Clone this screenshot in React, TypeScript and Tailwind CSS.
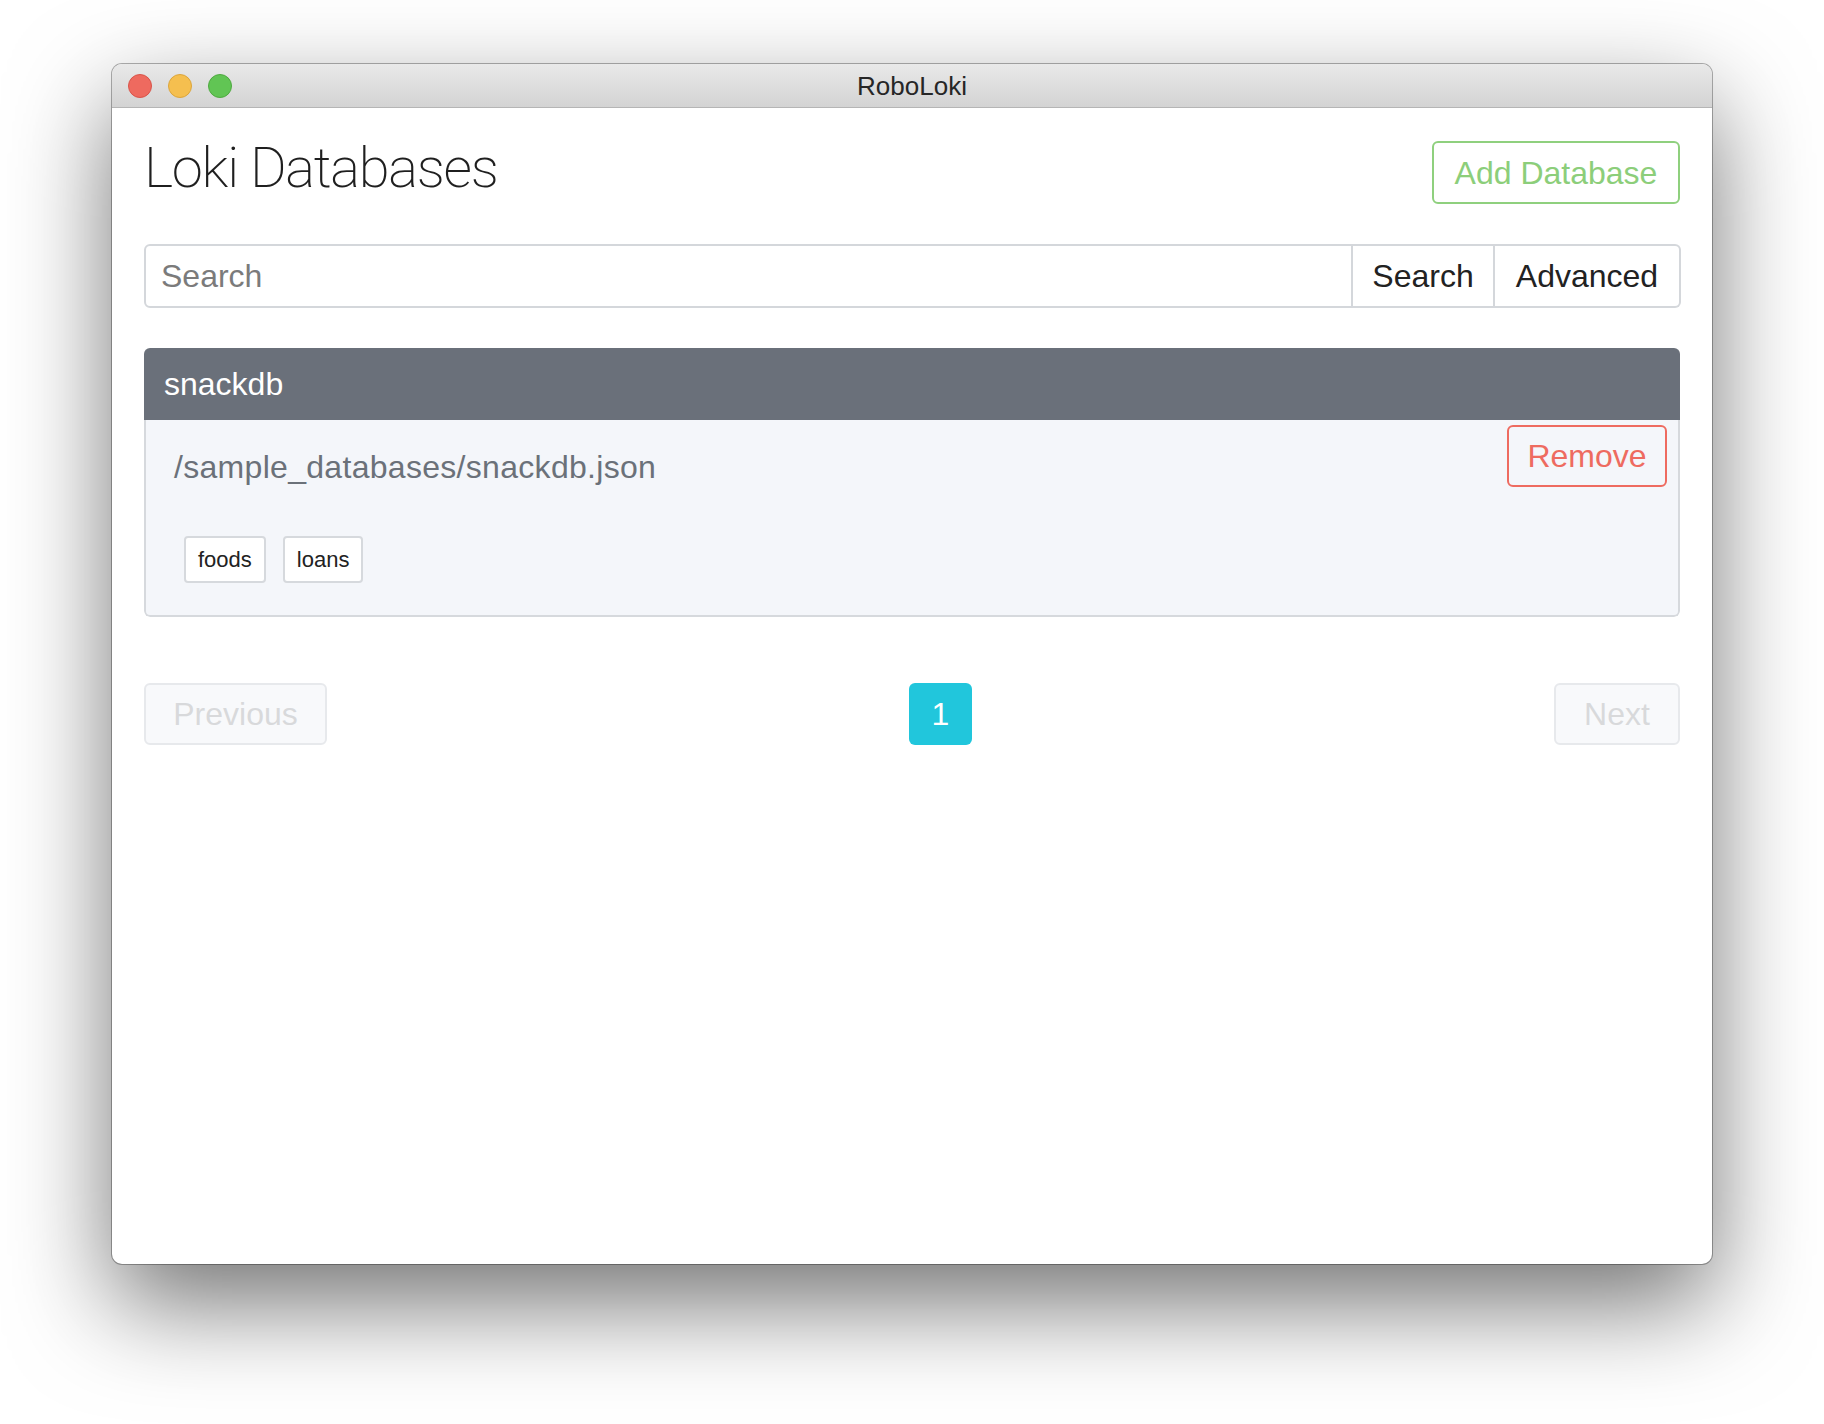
import React from 'react'

const tags = ['foods', 'loans']

function TrafficLights() {
  return (
    <div className="flex items-center gap-[16px] pl-[16px]">
      <span className="h-[24px] w-[24px] rounded-full border border-[#d8544a] bg-[#ee6a5f]" />
      <span className="h-[24px] w-[24px] rounded-full border border-[#dba53c] bg-[#f5bf4f]" />
      <span className="h-[24px] w-[24px] rounded-full border border-[#4fa940] bg-[#61c554]" />
    </div>
  )
}

function TitleBar() {
  return (
    <div className="grid h-[44px] grid-cols-[1fr_auto_1fr] items-center border-b border-[#b5b5b5] bg-linear-to-b from-[#e9e9e9] to-[#d3d3d3]">
      <TrafficLights />
      <div className="text-[26px] leading-none text-[#262626]">RoboLoki</div>
      <div />
    </div>
  )
}

function SearchBar() {
  return (
    <div className="mt-[40px] flex h-[64px] w-[calc(100%+1px)] text-[32px]">
      <input
        className="min-w-0 flex-1 rounded-l-[6px] border-2 border-[#d4d7db] bg-white pl-[15px] text-[#222] outline-none placeholder:text-[#7b7b7b]"
        placeholder="Search"
      />
      <button className="w-[142px] border-y-2 border-r-2 border-[#d4d7db] bg-white text-[#222]">Search</button>
      <button className="w-[186px] rounded-r-[6px] border-y-2 border-r-2 border-[#d4d7db] bg-white text-[#222]">
        Advanced
      </button>
    </div>
  )
}

function DatabaseCard() {
  return (
    <div className="mt-[40px] overflow-hidden rounded-[6px]">
      <div className="flex h-[72px] items-center bg-[#6a707a] pl-[20px] text-[32px] text-white">snackdb</div>
      <div className="rounded-b-[6px] border-x-2 border-b-2 border-[#d6d9dd] bg-[#f4f6fa] pb-[32px] pr-[11px] pt-[5px]">
        <div className="flex items-start justify-between">
          <div className="ml-[28px] mt-[18px] text-[32px] leading-[48px] tracking-[0.3px] text-[#6b7179]">
            /sample_databases/snackdb.json
          </div>
          <button className="h-[62px] w-[160px] rounded-[6px] border-2 border-[#ee6b60] text-[32px] text-[#ee6b60]">
            Remove
          </button>
        </div>
        <div className="ml-[38px] mt-[45px] flex gap-[17px]">
          {tags.map(tag => (
            <span
              key={tag}
              className="h-[47px] rounded-[4px] border-2 border-[#d6d9dd] bg-white px-[12px] text-[22px] leading-[43px] text-[#222]"
            >
              {tag}
            </span>
          ))}
        </div>
      </div>
    </div>
  )
}

function Pagination() {
  return (
    <div className="mt-[66px] flex items-center justify-between text-[32px]">
      <button className="h-[62px] w-[183px] rounded-[6px] border-2 border-[#e7e9ec] bg-[#f8f9fb] text-[#d8d9db]">
        Previous
      </button>
      <button className="h-[62px] w-[63px] rounded-[6px] bg-[#21c6dc] text-white">1</button>
      <button className="h-[62px] w-[126px] rounded-[6px] border-2 border-[#e7e9ec] bg-[#f8f9fb] text-[#d8d9db]">
        Next
      </button>
    </div>
  )
}

export default function App() {
  return (
    <div className="min-h-[1424px] w-full bg-white pl-[112px] pt-[64px] font-['Liberation_Sans','Helvetica_Neue',Arial,sans-serif]">
      <div className="flex h-[1200px] w-[1600px] flex-col overflow-hidden rounded-[10px] bg-white shadow-[0_40px_100px_rgba(0,0,0,0.55),0_0_0_1px_rgba(0,0,0,0.3)]">
        <TitleBar />
        <main className="flex flex-col px-[32px] pt-[27px]">
          <div className="flex items-start justify-between">
            <h1 className="font-['Roboto',sans-serif] text-[56px] font-extralight leading-[67px] tracking-[-1.3px] text-[#1f1f1f]">
              Loki Databases
            </h1>
            <button className="mt-[6px] h-[63px] w-[248px] rounded-[6px] border-2 border-[#8fd07e] text-[32px] text-[#8cce7a]">
              Add Database
            </button>
          </div>
          <SearchBar />
          <DatabaseCard />
          <Pagination />
        </main>
      </div>
    </div>
  )
}
